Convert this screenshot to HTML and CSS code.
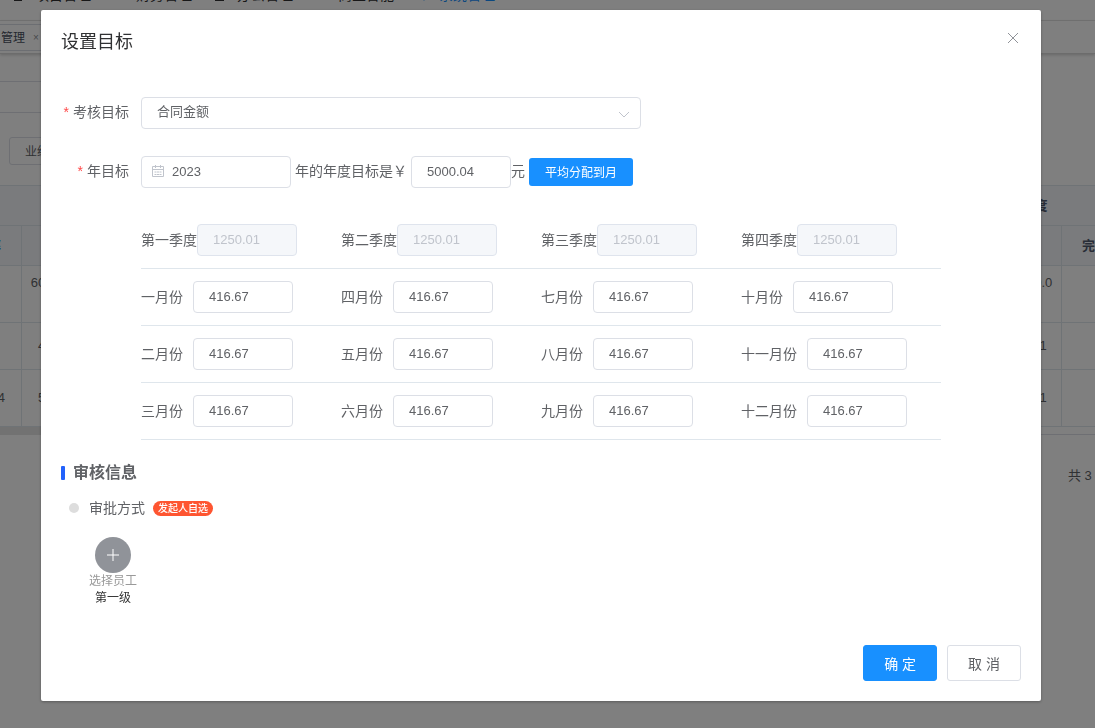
FILE: index.html
```html
<!DOCTYPE html>
<html lang="zh-CN">
<head>
<meta charset="utf-8">
<title>设置目标</title>
<link rel="stylesheet" href="styles.css">
</head>
<body>
<div class="page">
  <nav class="nav">
    <a href="#"><svg class="nav-icon" viewBox="0 0 14 14"><path d="M1 1h8v12H1zM11 9h2v3h-2z"/></svg>项目管理</a>
    <a href="#"><svg class="nav-icon" viewBox="0 0 14 14"><path d="M0 2h14v10H0z"/></svg>财务管理</a>
    <a href="#"><svg class="nav-icon" viewBox="0 0 14 14"><path d="M0 5h9v8H0zM10 3h3v9h-3z"/></svg>办公管理</a>
    <a href="#"><svg class="nav-icon" viewBox="0 0 14 14"><path d="M2 0h10v6H2z"/></svg>商业智能</a>
    <a href="#" class="active"><svg class="nav-icon" viewBox="0 0 14 14"><path d="M2 3h10L7 13z"/></svg>系统管理</a>
  </nav>
  <div class="tabs"><span class="tab">管理<i class="tab-close">×</i></span></div>
  <div class="filter"></div>
  <div class="tools"><button class="tool-btn" type="button">业绩</button></div>
  <table class="grid">
    <thead>
      <tr><th colspan="3"></th><th colspan="3"></th><th colspan="3"></th><th colspan="3"></th><th colspan="3">第四季度</th></tr>
      <tr><th class="link">完成率</th><th></th><th></th><th></th><th></th><th></th><th></th><th></th><th></th><th></th><th></th><th></th><th></th><th></th><th>完成率</th></tr>
    </thead>
    <tbody>
      <tr class="r1"><td></td><td>600000.00</td><td></td><td></td><td></td><td></td><td></td><td></td><td></td><td></td><td></td><td></td><td></td><td>6000000.0</td><td></td></tr>
      <tr class="r2"><td></td><td>4000.00</td><td></td><td></td><td></td><td></td><td></td><td></td><td></td><td></td><td></td><td></td><td></td><td>41,250.1</td><td></td></tr>
      <tr class="r3"><td>5000.04</td><td>5000.04</td><td></td><td></td><td></td><td></td><td></td><td></td><td></td><td></td><td></td><td></td><td></td><td>41,250.1</td><td></td></tr>
    </tbody>
  </table>
  <div class="track"><div class="thumb"></div></div>
  <div class="pager">共 3</div>
</div>

<div class="overlay">
  <section class="dialog" role="dialog" aria-labelledby="dialog-title">
    <header class="dialog-head">
      <h1 id="dialog-title">设置目标</h1>
      <button class="close" type="button" aria-label="关闭"><svg viewBox="0 0 16 16"><path d="M3 3l10 10M13 3L3 13"/></svg></button>
    </header>
    <form class="dialog-body">
      <div class="item">
        <label class="label" for="kind">考核目标</label>
        <div class="select">
          <select id="kind"><option>合同金额</option></select>
          <svg class="chevron" viewBox="0 0 14 14"><path d="M2 5l5 5 5-5"/></svg>
        </div>
      </div>
      <div class="item">
        <label class="label" for="year">年目标</label>
        <div class="date">
          <svg class="calendar" viewBox="0 0 14 14"><path d="M1.5 2.5h11v10h-11zM1.5 5.5h11M4.5 1v3M9.5 1v3M3.5 8h2M6 8h2M8.5 8h2M3.5 10.5h2M6 10.5h2M8.5 10.5h2"/></svg>
          <input id="year" type="text" value="2023">
        </div>
        <label class="unit" for="amount">年的年度目标是￥</label>
        <input id="amount" class="num" type="text" value="5000.04">
        <span>元</span>
        <button class="spread" type="button">平均分配到月</button>
      </div>
      <div class="months">
        <div class="row quarter">
          <label>第一季度<input class="num" type="text" value="1250.01" disabled></label>
          <label>第二季度<input class="num" type="text" value="1250.01" disabled></label>
          <label>第三季度<input class="num" type="text" value="1250.01" disabled></label>
          <label>第四季度<input class="num" type="text" value="1250.01" disabled></label>
        </div>
        <div class="row">
          <label>一月份<input class="num" type="text" value="416.67"></label>
          <label>四月份<input class="num" type="text" value="416.67"></label>
          <label>七月份<input class="num" type="text" value="416.67"></label>
          <label>十月份<input class="num" type="text" value="416.67"></label>
        </div>
        <div class="row">
          <label>二月份<input class="num" type="text" value="416.67"></label>
          <label>五月份<input class="num" type="text" value="416.67"></label>
          <label>八月份<input class="num" type="text" value="416.67"></label>
          <label>十一月份<input class="num" type="text" value="416.67"></label>
        </div>
        <div class="row">
          <label>三月份<input class="num" type="text" value="416.67"></label>
          <label>六月份<input class="num" type="text" value="416.67"></label>
          <label>九月份<input class="num" type="text" value="416.67"></label>
          <label>十二月份<input class="num" type="text" value="416.67"></label>
        </div>
      </div>
      <h2 class="section">审核信息</h2>
      <div class="mode"><span class="dot"></span>审批方式<span class="badge">发起人自选</span></div>
      <div class="approver">
        <button class="add" type="button" aria-label="选择员工"><svg viewBox="0 0 14 14"><path d="M1 7h12M7 1v12"/></svg></button>
        <span class="hint">选择员工</span>
        <span class="level">第一级</span>
      </div>
    </form>
    <footer class="dialog-foot">
      <button class="btn primary" type="button">确 定</button>
      <button class="btn" type="button">取 消</button>
    </footer>
  </section>
</div>
</body>
</html>
```
FILE: styles.css
```css
* { box-sizing: border-box; }

body {
  margin: 0;
  overflow: hidden;
  color: #606266;
  font: 14px/20px "Liberation Sans", "Noto Sans CJK SC", sans-serif;
}

button, input, select { font-family: inherit; }

/* Page behind the dialog */
.page { min-height: 100vh; overflow: hidden; background: #fff; }

.nav {
  display: flex;
  align-items: center;
  gap: 22px;
  height: 51px;
  margin-top: -30px;
  padding-left: 13px;
  border-bottom: 1px solid #e6e6e6;
}
.nav a { display: flex; align-items: center; gap: 8px; width: 79px; color: #303133; text-decoration: none; white-space: nowrap; }
.nav a.active { color: #1890ff; }
.nav-icon { flex: none; width: 14px; height: 14px; fill: currentColor; }

.tabs { height: 33px; padding-top: 3px; border-bottom: 1px solid #d8d8d8; box-shadow: 0 1px 3px rgba(0, 0, 0, .2); }
.tab {
  display: flex;
  align-items: center;
  gap: 8px;
  width: 60px;
  height: 27px;
  padding-left: 1px;
  border: 1px solid #d8dce5;
  border-left: 0;
  color: #495060;
  font-size: 12px;
}
.tab-close { color: #909399; font-style: normal; font-size: 10px; }

.filter { width: 900px; height: 32px; margin-top: 27px; border: 1px solid #dcdfe6; border-width: 1px 0; }
.tools { height: 72px; padding: 24px 9px; }
.tool-btn { height: 28px; padding: 0 15px 1px; border: 1px solid #dcdfe6; border-radius: 3px; background: #fff; color: #606266; font-size: 12px; }

.grid {
  width: 1201px;
  margin-left: -59px;
  border-collapse: collapse;
  table-layout: fixed;
  font-size: 13px;
  text-align: center;
}
.grid th, .grid td { padding: 0; border: 1px solid #dfe6ec; }
.grid th { height: 40px; background: #f5f7fa; color: #515a6e; }
.grid th.link { color: #1890ff; }
.r1 { height: 57px; }
.r1 td { padding-top: 7px; vertical-align: top; }
.r2 { height: 47px; }
.r3 { height: 57px; }
.track { height: 8px; border-bottom: 1px solid #dcdfe6; }
.thumb { width: 600px; height: 8px; background: #e4e4e4; }
.pager { padding: 31px 0 0 1068px; font-size: 13px; white-space: nowrap; }

/* Dialog */
.overlay {
  position: fixed;
  inset: 0;
  display: flex;
  align-items: flex-start;
  justify-content: center;
  padding: 10px 13px 0 0;
  background: rgba(0, 0, 0, .5);
}
.dialog {
  width: 100%;
  max-width: 1000px;
  border-radius: 2px;
  background: #fff;
  box-shadow: 0 1px 3px rgba(0, 0, 0, .3);
}
.dialog-head { display: flex; align-items: flex-start; justify-content: space-between; padding: 20px 20px 10px; }
.dialog-head h1 { margin: 0; color: #303133; font-size: 18px; font-weight: 400; line-height: 24px; }
.close { padding: 0; border: 0; background: none; line-height: 16px; }
.close svg { width: 16px; height: 16px; fill: none; stroke: #909399; }
.dialog-body { padding: 33px 20px 38px; }

.item { display: flex; align-items: center; height: 32px; margin-bottom: 27px; }
.item span { line-height: 30px; height: 32px; }
.label { width: 80px; padding-right: 12px; line-height: 30px; height: 32px; text-align: right; white-space: nowrap; }
.label::before { content: "*"; margin-right: 4px; color: #ff4949; }
.unit { padding: 0 4px; height: 32px; line-height: 30px; white-space: nowrap; }

input, select {
  height: 32px;
  padding: 0 15px 1px;
  border: 1px solid #dcdfe6;
  border-radius: 4px;
  background: #fff;
  color: #606266;
  font-size: 13px;
}
.select { position: relative; width: 500px; }
.select select { width: 100%; appearance: none; padding-bottom: 3px; }
.chevron { position: absolute; right: 10px; top: 10px; width: 14px; height: 14px; fill: none; stroke: #c0c4cc; pointer-events: none; }
.date { position: relative; width: 150px; }
.date input { width: 100%; padding-left: 30px; }
.calendar { position: absolute; left: 10px; top: 8px; width: 14px; height: 14px; fill: none; stroke: #c0c4cc; }
.num { width: 100px; }
.num:disabled { border-color: #dfe4ed; background: #f5f7fa; color: #c0c4cc; }
.spread {
  height: 28px;
  margin-left: 4px;
  padding: 0 16px 2px;
  border: 0;
  border-radius: 3px;
  background: #1890ff;
  color: #fff;
  font-size: 12px;
}

.months { max-width: 800px; margin: -3px 0 0 80px; }
.row { display: grid; grid-template-columns: repeat(4, 1fr); padding: 12px 0; border-bottom: 1px solid #dfe6ec; }
.row label { display: flex; align-items: center; gap: 10px; white-space: nowrap; }
.quarter label { gap: 0; }

.section { display: flex; align-items: center; gap: 8px; margin: 21px 0 13px; font-size: 16px; line-height: 24px; }
.section::before { content: ""; width: 4px; height: 14px; border-radius: 1px; background: #2362fb; }
.mode { display: flex; align-items: center; padding-left: 8px; }
.dot { width: 10px; height: 10px; margin-right: 10px; border-radius: 50%; background: #ddd; }
.badge { margin-left: 8px; padding: 0 5px; border-radius: 8px; background: #fe5531; color: #fff; font-size: 10px; font-weight: 500; line-height: 15px; }
.approver { display: flex; flex-direction: column; align-items: center; width: 64px; margin: 19px 0 0 20px; font-size: 12px; line-height: 17px; }
.add { display: flex; align-items: center; justify-content: center; width: 36px; height: 36px; padding: 0; border: 0; border-radius: 50%; background: #909399; }
.add svg { width: 14px; height: 14px; fill: none; stroke: #fff; }
.hint { color: #999; }
.level { color: #333; }

.dialog-foot { display: flex; justify-content: flex-end; gap: 10px; padding: 0 20px 20px; }
.btn { height: 36px; padding: 0 20px 1px; border: 1px solid #dcdfe6; border-radius: 3px; background: #fff; color: #606266; font-size: 14px; }
.btn.primary { border-color: #1890ff; background: #1890ff; color: #fff; }
```
